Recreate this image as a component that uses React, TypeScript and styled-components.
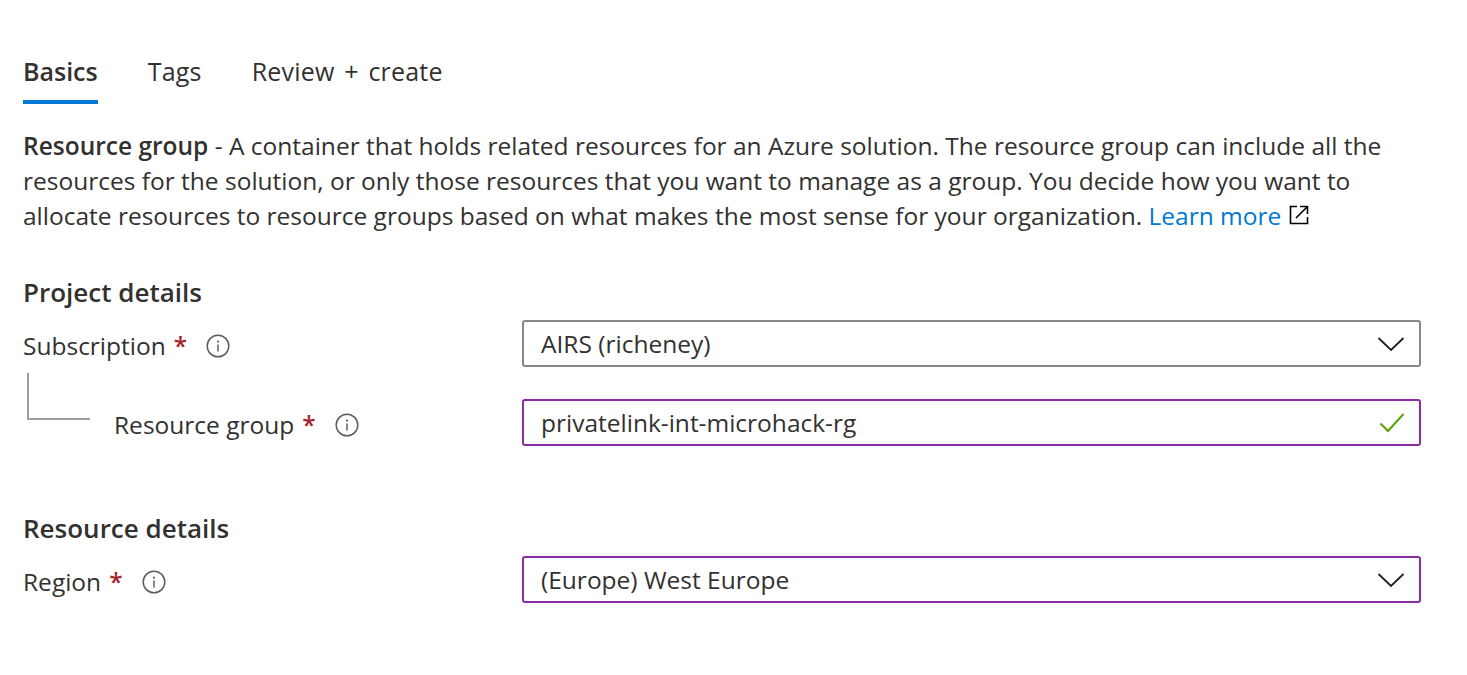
import React from 'react'
import styled, { createGlobalStyle } from 'styled-components'

const GlobalStyle = createGlobalStyle`
  body {
    margin: 0;
    background: #fff;
    color: #323130;
    font-family: 'Open Sans', 'Noto Sans', sans-serif;
  }
`

const Page = styled.div`
  width: 1398px;
  padding: 50px 0 0 23px;
`

const TabBar = styled.div`
  display: flex;
  gap: 50px;
`

const Tab = styled.div<{ active?: boolean }>`
  font-size: 25px;
  line-height: 42px;
  word-spacing: 3px;
  letter-spacing: ${p => (p.active ? '0' : '0.2px')};
  font-weight: ${p => (p.active ? 600 : 400)};
  color: #323130;
  padding-bottom: 8px;
  border-bottom: 4px solid ${p => (p.active ? '#0078d4' : 'transparent')};
`

const Description = styled.p`
  margin: 24px 0 0;
  font-size: 24.5px;
  line-height: 35px;
  width: 1385px;
`

const Strong = styled.span`
  font-weight: 600;
`

const Link = styled.a`
  color: #0078d4;
  text-decoration: none;
`

const ExternalIcon = styled.svg`
  display: inline-block;
  width: 20px;
  height: 20px;
  margin-left: 8px;
  vertical-align: 0px;
`

const SectionTitle = styled.h3<{ gap: number }>`
  margin: ${p => p.gap}px 0 0;
  font-size: 26px;
  line-height: 32px;
  font-weight: 600;
`

const FieldRow = styled.div<{ top: number }>`
  display: grid;
  grid-template-columns: 499px 899px;
  align-items: center;
  margin-top: ${p => p.top}px;
`

const Label = styled.div<{ nested?: boolean }>`
  display: flex;
  align-items: center;
  font-size: 24.5px;
  padding-top: 4px;
  padding-left: ${p => (p.nested ? '4px' : '0')};
`

// tree line joining the nested field to its parent; negative margins keep it out of the row height
const Connector = styled.span`
  width: 61px;
  height: 45px;
  border-left: 2px solid #a19f9d;
  border-bottom: 2px solid #a19f9d;
  margin: -12px 24px -12px 0;
  transform: translateY(-28px);
  flex-shrink: 0;
`

const Required = styled.span`
  color: #a4262c;
  font-weight: 600;
  margin-left: 8px;
`

const InfoIcon = styled.svg`
  width: 24px;
  height: 24px;
  margin-left: 19px;
`

const Field = styled.div<{ focused?: boolean }>`
  display: flex;
  align-items: center;
  justify-content: space-between;
  height: 47px;
  box-sizing: border-box;
  border: 2px solid ${p => (p.focused ? '#8a2da5' : '#8a8886')};
  border-radius: 3px;
  padding: 0 14px 0 17px;
  font-size: 24.5px;
  color: #323130;
`

const Info = () => (
  <InfoIcon viewBox="0 0 24 24" fill="none">
    <circle cx="12" cy="12" r="10.8" stroke="#605e5c" strokeWidth="1.5" />
    <circle cx="12" cy="7.6" r="1.1" fill="#605e5c" />
    <path d="M12 10.5v7" stroke="#605e5c" strokeWidth="1.5" />
  </InfoIcon>
)

const Chevron = () => (
  <svg width="28" height="16" viewBox="0 0 28 16" fill="none">
    <path d="M1.5 2L14 14L26.5 2" stroke="#201f1e" strokeWidth="1.8" />
  </svg>
)

const Check = () => (
  <svg width="26" height="22" viewBox="0 0 26 22" fill="none">
    <path d="M1.5 11.5L9 19L24.5 2" stroke="#57a300" strokeWidth="2" />
  </svg>
)

export default function App() {
  return (
    <>
      <GlobalStyle />
      <Page>
        <TabBar>
          <Tab active>Basics</Tab>
          <Tab>Tags</Tab>
          <Tab>Review + create</Tab>
        </TabBar>

        <Description>
          <Strong>Resource group</Strong> - A container that holds related resources for an Azure
          solution. The resource group can include all the resources for the solution, or only
          those resources that you want to manage as a group. You decide how you want to allocate
          resources to resource groups based on what makes the most sense for your organization.{' '}
          <Link href="#">Learn more</Link>
          <ExternalIcon viewBox="0 0 20 20" fill="none">
            <path d="M8 1.5H1.5v17h17V12" stroke="#000" strokeWidth="1.6" />
            <path d="M7 13L18 2M11 1.5h7.5V9" stroke="#000" strokeWidth="1.6" />
          </ExternalIcon>
        </Description>

        <SectionTitle gap={43}>Project details</SectionTitle>

        <FieldRow top={12}>
          <Label>
            Subscription<Required>*</Required>
            <Info />
          </Label>
          <Field>
            AIRS (richeney)
            <Chevron />
          </Field>
        </FieldRow>

        <FieldRow top={32}>
          <Label nested>
            <Connector />
            Resource group<Required>*</Required>
            <Info />
          </Label>
          <Field focused>
            privatelink-int-microhack-rg
            <Check />
          </Field>
        </FieldRow>

        <SectionTitle gap={66}>Resource details</SectionTitle>

        <FieldRow top={12}>
          <Label>
            Region<Required>*</Required>
            <Info />
          </Label>
          <Field focused>
            (Europe) West Europe
            <Chevron />
          </Field>
        </FieldRow>
      </Page>
    </>
  )
}
